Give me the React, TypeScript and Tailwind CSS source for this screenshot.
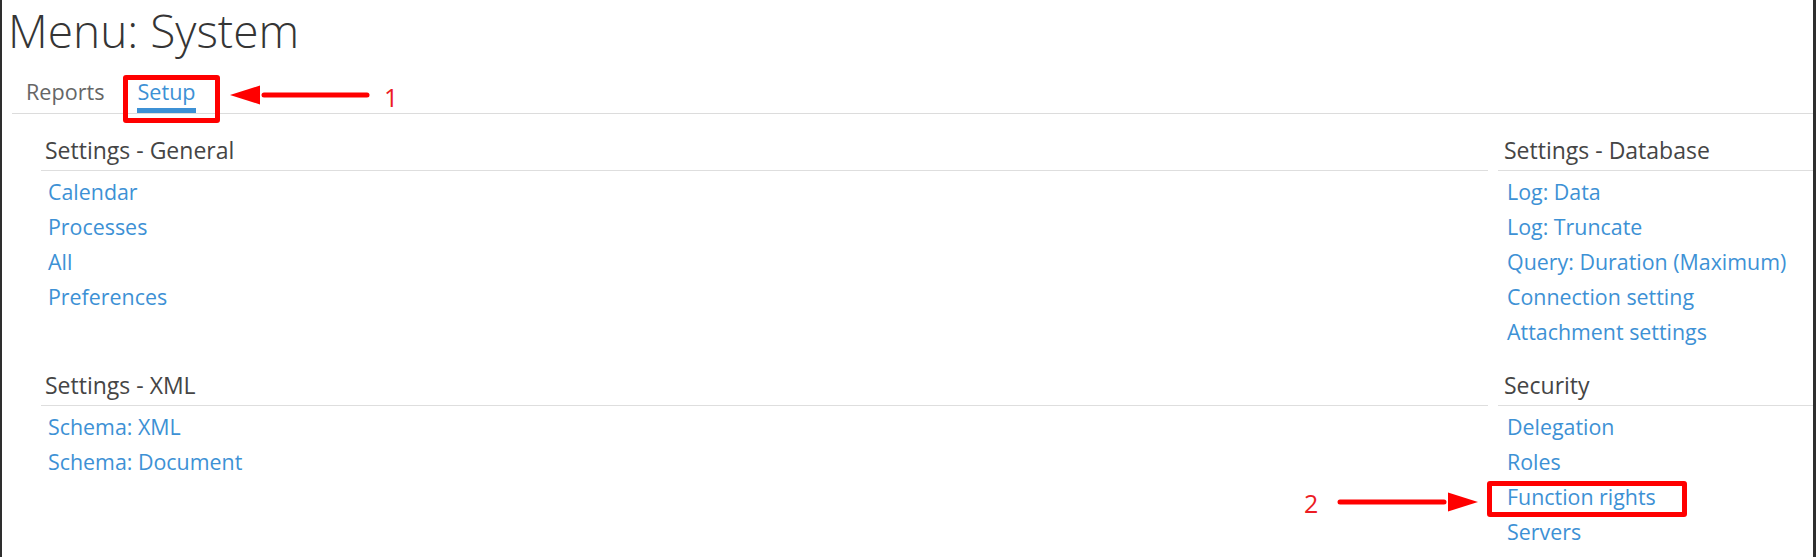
const sections = [
  {
    title: "Settings - General",
    links: ["Calendar", "Processes", "All", "Preferences"],
    side: "left",
  },
  {
    title: "Settings - Database",
    links: [
      "Log: Data",
      "Log: Truncate",
      "Query: Duration (Maximum)",
      "Connection setting",
      "Attachment settings",
    ],
    side: "right",
  },
  {
    title: "Settings - XML",
    links: ["Schema: XML", "Schema: Document"],
    side: "left",
  },
  {
    title: "Security",
    links: ["Delegation", "Roles", "Function rights", "Servers"],
    side: "right",
  },
];

const Section = ({ title, links, side }: { title: string; links: string[]; side: string }) => (
  <div>
    <h3
      className={`text-[23px] leading-[30px] pb-[5px] border-b border-[#dedede] text-[#454545] font-normal whitespace-nowrap ${
        side === "left" ? "pl-[4px]" : "pl-[6px]"
      }`}
    >
      {title}
    </h3>
    <ul className={`pt-[3px] ${side === "left" ? "pl-[7px]" : "pl-[9px]"}`}>
      {links.map((l) => (
        <li key={l} className="text-[21.4px] leading-[35px] text-[#3d91d5] whitespace-nowrap">
          <a href="#">{l}</a>
        </li>
      ))}
    </ul>
  </div>
);

const Arrow = ({
  x1,
  x2,
  tip,
  y,
  dir,
}: {
  x1: number;
  x2: number;
  tip: number;
  y: number;
  dir: "left" | "right";
}) => {
  // shaft from x1 to x2, head base at x2, point at tip
  const minX = Math.min(x1, tip) - 4;
  const maxX = Math.max(x1, tip) + 4;
  const w = maxX - minX;
  return (
    <svg
      className="absolute"
      style={{ left: minX, top: y - 12 }}
      width={w}
      height={24}
      viewBox={`0 0 ${w} 24`}
    >
      <line
        x1={x1 - minX}
        y1={12}
        x2={x2 - minX + (dir === "left" ? 4 : -4)}
        y2={12}
        stroke="#ff0000"
        strokeWidth={5}
        strokeLinecap="round"
      />
      <polygon points={`${tip - minX},12 ${x2 - minX},2.5 ${x2 - minX},21.5`} fill="#ff0000" />
    </svg>
  );
};

export default function App() {
  return (
    <div className="relative w-full h-[557px] bg-white overflow-hidden" style={{ fontFamily: '"Open Sans", sans-serif' }}>
      <div className="h-full border-l-2 border-r-[3px] border-[#2e2e2e]">
        <h1 className="pl-[6px] pt-[4px] text-[46px] leading-[52px] font-light text-[#353535] whitespace-nowrap">
          Menu: System
        </h1>

        <div className="ml-[10px] mt-[22px] flex gap-[33px] pl-[14px] border-b border-[#dcdcdc]">
          <div className="flex flex-col">
            <span className="text-[21.6px] leading-[28px] text-[#666]">Reports</span>
            <span className="h-[5px] mt-[2px]" />
          </div>
          <div className="flex flex-col">
            <span className="text-[21.6px] leading-[28px] text-[#3d91d5]">Setup</span>
            <span className="h-[5px] mt-[2px] bg-[#3d91d5]" />
          </div>
        </div>

        <div className="ml-[39px] pt-[21px] grid grid-cols-[1fr_315px] gap-x-[10px] gap-y-[21px]">
          {sections.map((s) => (
            <Section key={s.title} {...s} />
          ))}
        </div>
      </div>

      {/* annotation 1 */}
      <div className="absolute left-[123px] top-[75px] w-[97px] h-[48px] border-[5px] border-[#ff0000] rounded-[3px]" />
      <Arrow x1={367} x2={260} tip={230} y={95} dir="left" />
      <span className="absolute left-[384px] top-[81px] text-[25px] leading-[32px] text-[#ec1c24]">1</span>

      {/* annotation 2 */}
      <div className="absolute left-[1487px] top-[481px] w-[200px] h-[36px] border-[5px] border-[#ff0000] rounded-[3px]" />
      <Arrow x1={1340} x2={1448} tip={1478} y={502} dir="right" />
      <span className="absolute left-[1304px] top-[487px] text-[25px] leading-[32px] text-[#ec1c24]">2</span>
    </div>
  );
}
